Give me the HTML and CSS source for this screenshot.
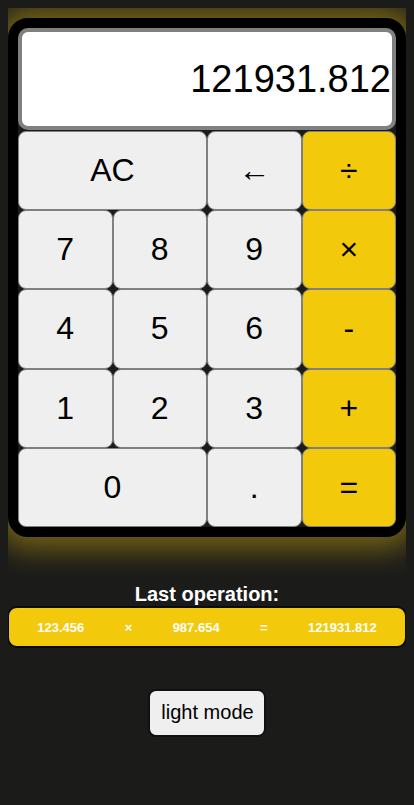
FILE: index.html
```html
<!DOCTYPE html>
<html>
<head>
<meta charset="utf-8">
<link rel="stylesheet" href="styles.css">
</head>
<body>
<div class="calc">
  <div class="display">121931.812</div>
  <div class="keys">
    <button class="key wide">AC</button>
    <button class="key">←</button>
    <button class="key op">÷</button>
    <button class="key">7</button>
    <button class="key">8</button>
    <button class="key">9</button>
    <button class="key op">×</button>
    <button class="key">4</button>
    <button class="key">5</button>
    <button class="key">6</button>
    <button class="key op">-</button>
    <button class="key">1</button>
    <button class="key">2</button>
    <button class="key">3</button>
    <button class="key op">+</button>
    <button class="key wide">0</button>
    <button class="key">.</button>
    <button class="key op">=</button>
  </div>
</div>
<h3 class="last-title">Last operation:</h3>
<div class="last-op">
  <span>123.456</span>
  <span>×</span>
  <span>987.654</span>
  <span>=</span>
  <span>121931.812</span>
</div>
<div class="mode-wrap">
  <button class="mode">light mode</button>
</div>
</body>
</html>
```
FILE: styles.css
```css
html, body {
  background: #1b1b1a;
}
body {
  margin: 8px;
  font-family: "Liberation Sans", Arial, sans-serif;
}
.calc {
  margin-top: 10px;
  border: 10px solid #000;
  border-radius: 20px;
  background: #1b1b1a;
  box-shadow: 0 0 30px 12px rgba(243, 201, 11, 0.42);
  display: flex;
  flex-direction: column;
}
.display {
  height: 94px;
  border: 4px solid #808080;
  border-radius: 10px;
  background: #fff;
  color: #000;
  font-size: 38px;
  display: flex;
  align-items: center;
  justify-content: flex-end;
  padding-right: 1px;
  overflow: hidden;
  white-space: nowrap;
}
.keys {
  display: grid;
  grid-template-columns: repeat(4, 1fr);
  grid-template-rows: repeat(5, 1fr);
  height: 396px;
  margin-top: 1px;
}
.key {
  margin: 0;
  padding: 0;
  border: 1px solid #808080;
  border-radius: 8px;
  background: #efefef;
  color: #000;
  font-family: "Liberation Sans", Arial, sans-serif;
  font-size: 32px;
}
.key.wide {
  grid-column: span 2;
}
.key.op {
  background: #f3c90b;
}
.last-title {
  margin: 46px 0 0;
  font-size: 20px;
  line-height: 23px;
  font-weight: bold;
  color: #fff;
  text-align: center;
}
.last-op {
  margin: 0 -1px;
  height: 38px;
  border: 2px solid #0a0a0a;
  border-radius: 10px;
  background: #f3c90b;
  color: #fff;
  font-size: 13px;
  font-weight: bold;
  display: flex;
  align-items: center;
  justify-content: space-around;
  padding: 0 8px;
}
.mode-wrap {
  display: flex;
  justify-content: center;
  margin-top: 41px;
}
.mode {
  margin: 0;
  padding: 10px 10px 11px 11px;
  border: 2px solid #111;
  border-radius: 8px;
  background: #efefef;
  color: #000;
  font-family: "Liberation Sans", Arial, sans-serif;
  font-size: 20px;
  line-height: 23px;
}
```
